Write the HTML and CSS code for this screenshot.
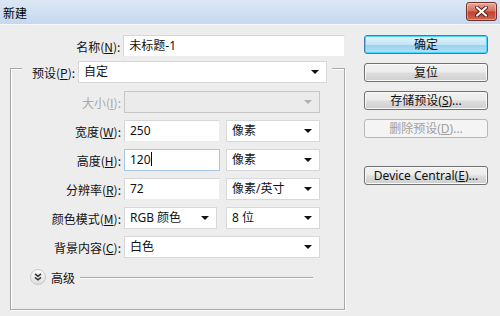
FILE: index.html
```html
<!DOCTYPE html>
<html lang="zh-CN">
<head>
  <meta charset="UTF-8">
  <title>新建</title>
  <link rel="stylesheet" href="styles.css">
</head>
<body>

  <div class="window">
    <div class="titlebar">
      <span class="title">新建</span>
      <span class="close">
        <svg width="13" height="11" viewBox="0 0 13 11">
          <path d="M2 1.5 L11 9.5 M11 1.5 L2 9.5" stroke="#5a1a12" stroke-width="4" stroke-linecap="round"/>
          <path d="M2 1.5 L11 9.5 M11 1.5 L2 9.5" stroke="#fff" stroke-width="2.2" stroke-linecap="round"/>
        </svg>
      </span>
    </div>

    <div class="content">
      <div class="form">
        <div class="row name-row">
          <label class="lbl">名称(<u>N</u>):</label>
          <div class="field text w222">未标题-1</div>
        </div>

        <div class="group">
          <div class="row preset-row">
            <label class="plbl">预设(<u>P</u>):</label>
            <div class="field select w248">自定<span class="arrow"></span></div>
          </div>

          <div class="row">
            <label class="lbl disabled">大小(<u>I</u>):</label>
            <div class="field select off w196"><span class="arrow"></span></div>
          </div>

          <div class="row">
            <label class="lbl">宽度(<u>W</u>):</label>
            <div class="field text w96">250</div>
            <div class="field select w94 gap">像素<span class="arrow"></span></div>
          </div>

          <div class="row">
            <label class="lbl">高度(<u>H</u>):</label>
            <div class="field text w96 focus">120<span class="caret"></span></div>
            <div class="field select w94 gap">像素<span class="arrow"></span></div>
          </div>

          <div class="row">
            <label class="lbl">分辨率(<u>R</u>):</label>
            <div class="field text w96">72</div>
            <div class="field select w94 gap">像素/英寸<span class="arrow"></span></div>
          </div>

          <div class="row">
            <label class="lbl">颜色模式(<u>M</u>):</label>
            <div class="field select w93">RGB 颜色<span class="arrow"></span></div>
            <div class="field select w94 gap2">8 位<span class="arrow"></span></div>
          </div>

          <div class="row">
            <label class="lbl">背景内容(<u>C</u>):</label>
            <div class="field select w196">白色<span class="arrow"></span></div>
          </div>

          <div class="advanced">
            <span class="chevron">
              <svg width="8" height="8" viewBox="0 0 8 8">
                <path d="M1 0.8 L4 3.3 L7 0.8 M1 4.3 L4 6.8 L7 4.3" fill="none" stroke="#333" stroke-width="1.5"/>
              </svg>
            </span>
            <span class="adv-text">高级</span>
            <span class="rule"></span>
          </div>
        </div>
      </div>

      <div class="buttons">
        <button class="btn default">确定</button>
        <button class="btn">复位</button>
        <button class="btn">存储预设(<u>S</u>)...</button>
        <button class="btn" disabled>删除预设(<u>D</u>)...</button>
        <button class="btn spaced">Device Central(<u>E</u>)...</button>
      </div>
    </div>
  </div>

</body>
</html>
```

FILE: styles.css
```css
body {
  margin: 0;
  padding: 0;
  font-family: "Noto Sans", "Noto Sans CJK SC", sans-serif;
  font-size: 12px;
  color: #111;
  background-color: #ededed;
}

.window {
  width: 500px;
  height: 316px;
  background-color: #ededed;
  overflow: hidden;
}

.titlebar {
  height: 24px;
  display: flex;
  align-items: center;
  justify-content: space-between;
  padding: 0 3px 0 3px;
  background: linear-gradient(#dce7f4, #c6d8ee);
  border-bottom: 1px solid #f4f7fb;
}

.title {
  font-family: "Noto Sans CJK SC", sans-serif;
  font-size: 12px;
  color: #000;
}

.close {
  width: 29px;
  height: 17px;
  margin-top: -1px;
  display: flex;
  align-items: center;
  justify-content: center;
  border: 1px solid #6f3128;
  border-radius: 3px;
  background: linear-gradient(#e9a897, #d36f5c 48%, #c2412f 52%, #d0644f);
  box-shadow: inset 0 0 0 1px rgba(255, 255, 255, 0.35);
}

.content {
  display: flex;
  padding-top: 10px;
}

.form {
  width: 345px;
}

.row {
  display: flex;
  align-items: center;
  height: 22px;
  margin-bottom: 7px;
}

.name-row {
  margin-bottom: 0;
}

.name-row .lbl {
  width: 121px;
  margin-right: 3px;
}

.lbl {
  width: 110px;
  margin-right: 3px;
  text-align: right;
  font-family: "Noto Sans CJK SC", sans-serif;
}

.lbl.disabled {
  color: #a8a8a8;
}

u {
  text-decoration: underline;
  text-underline-offset: 1px;
}

.field {
  position: relative;
  height: 20px;
  line-height: 20px;
  padding-left: 5px;
  box-sizing: border-box;
  height: 22px;
  background-color: #fff;
  border: 1px solid #e2e2e2;
  border-top-color: #d4d4d4;
  white-space: nowrap;
}

.text {
  border-color: #d6d6d6 #ececec #ececec #d6d6d6;
}

.focus {
  border: 1px solid #a6c7e6;
}

.caret {
  display: inline-block;
  width: 1px;
  height: 14px;
  background-color: #000;
  vertical-align: -2px;
}

.select {
  border: 1px solid #d8d8d8;
}

.off {
  background-color: #ebebeb;
  border-color: #c6c6c6;
}

.arrow {
  position: absolute;
  right: 7px;
  top: 8px;
  width: 0;
  height: 0;
  border-left: 4px solid transparent;
  border-right: 4px solid transparent;
  border-top: 4px solid #111;
}

.off .arrow {
  border-top-color: #b0b0b0;
}

.w222 { width: 223px; }
.w248 { width: 249px; }
.w196 { width: 196px; }
.w96 { width: 96px; }
.w94 { width: 94px; }
.w93 { width: 93px; }

.gap { margin-left: 6px; }
.gap2 { margin-left: 9px; }

.group {
  margin: 11px 0 0 10px;
  width: 335px;
  height: 242px;
  box-sizing: border-box;
  border: 1px solid #a8a8a8;
  box-shadow: 1px 1px 0 #fff, inset 1px 1px 0 #fff;
}

.preset-row {
  margin: -8px 12px 8px 11px;
  background-color: #ededed;
  padding-left: 10px;
}

.plbl {
  font-family: "Noto Sans CJK SC", sans-serif;
  margin-right: 3px;
}

.advanced {
  display: flex;
  align-items: center;
  margin: 11px 0 0 19px;
  height: 16px;
}

.chevron {
  width: 14px;
  height: 14px;
  border-radius: 50%;
  border: 1px solid #c8c8c8;
  background: linear-gradient(#fafafa, #dedede);
  display: flex;
  align-items: center;
  justify-content: center;
}

.adv-text {
  font-family: "Noto Sans CJK SC", sans-serif;
  margin-left: 5px;
  font-size: 12px;
}

.rule {
  flex: 1;
  height: 0;
  margin: 1px 31px 0 5px;
  border-top: 1px solid #a8a8a8;
  border-bottom: 1px solid #fff;
}

.buttons {
  margin-left: 19px;
  display: flex;
  flex-direction: column;
}

.btn {
  width: 124px;
  height: 19px;
  margin-bottom: 9px;
  padding: 0;
  font-family: "Noto Sans", "Noto Sans CJK SC", sans-serif;
  font-size: 12px;
  line-height: 16px;
  color: #111;
  border: 1px solid #707070;
  border-radius: 3px;
  background: linear-gradient(#f2f2f2, #ebebeb 48%, #dddddd 52%, #cfcfcf);
  box-shadow: inset 0 0 0 1px #fafafa;
}

.btn.default {
  border-color: #3c7fb1;
  background: linear-gradient(#e5f4fc, #c4e5f6 50%, #98d1ef 52%, #b6e0f5);
  box-shadow: inset 0 0 0 1px #48d5ff;
}

.btn:disabled {
  color: #a0a0a0;
  border-color: #b8b8b8;
  background: #f4f4f4;
  box-shadow: none;
}

.btn.spaced {
  margin-top: 19px;
}
```
